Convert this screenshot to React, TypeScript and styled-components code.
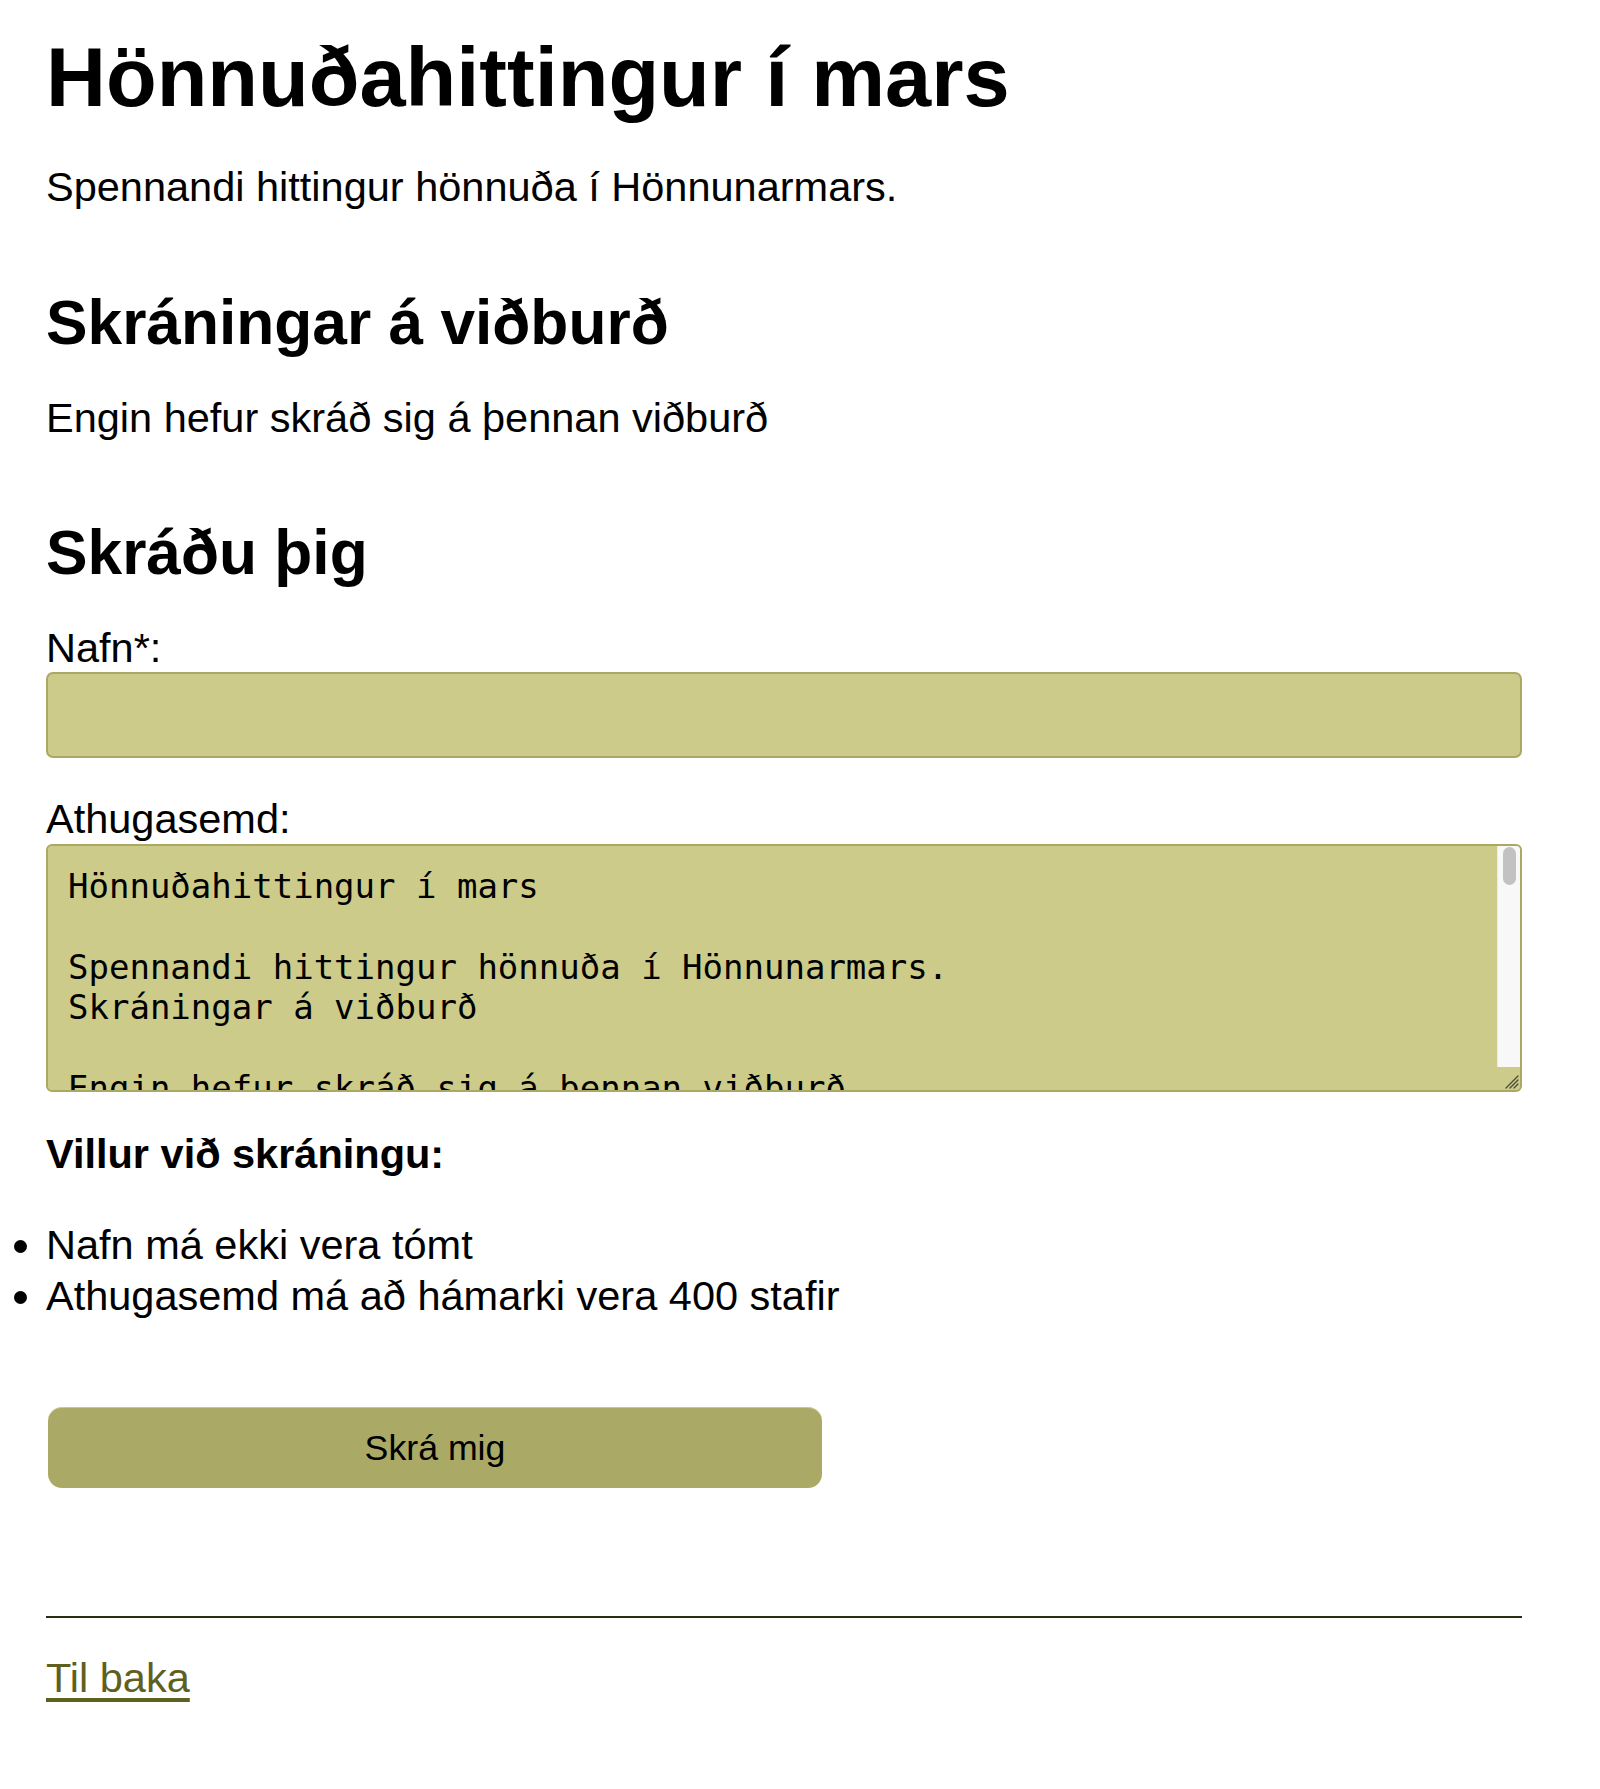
import React from "react";
import styled, { createGlobalStyle } from "styled-components";

const GlobalStyle = createGlobalStyle`
  html, body {
    margin: 0;
    padding: 0;
    background: #ffffff;
  }
  body {
    font-family: "Liberation Sans", Arial, Helvetica, sans-serif;
    font-size: 41.5px;
    color: #000000;
  }
`;

const Page = styled.main`
  padding: 30px 78px 80px 46px;
`;

const Title = styled.h1`
  font-size: 83px;
  font-weight: 700;
  line-height: normal;
  margin: 0 0 37px;
`;

const Text = styled.p<{ $gap: number }>`
  margin: 0 0 ${(p) => p.$gap}px;
  line-height: normal;
`;

const SectionTitle = styled.h2`
  font-size: 62.25px;
  font-weight: 700;
  line-height: normal;
  margin: 0 0 36px;
`;

const Form = styled.form`
  display: flex;
  flex-direction: column;
`;

const Field = styled.div`
  display: flex;
  flex-direction: column;
  margin-bottom: 37px;
`;

const Label = styled.label`
  display: block;
  line-height: normal;
`;

const TextInput = styled.input`
  box-sizing: border-box;
  width: 100%;
  height: 86px;
  margin: 0;
  padding: 0 18px;
  background: #cccb8a;
  border: 2px solid #aaa963;
  border-radius: 7px;
  font-family: "Liberation Sans", Arial, sans-serif;
  font-size: 41.5px;
  outline: none;
`;

const TextAreaWrap = styled.div`
  position: relative;
  margin-top: 1px;
  height: 248px;
`;

const TextArea = styled.textarea`
  box-sizing: border-box;
  display: block;
  width: 100%;
  height: 100%;
  margin: 0;
  padding: 20px 48px 20px 20px;
  background: #cccb8a;
  border: 2px solid #aaa963;
  border-radius: 6px;
  font-family: "DejaVu Sans Mono", "Liberation Mono", monospace;
  font-size: 34px;
  line-height: 40.4px;
  color: #000;
  outline: none;
  resize: none;
  overflow: hidden;
`;

const ScrollTrack = styled.div`
  position: absolute;
  top: 2px;
  right: 2px;
  bottom: 25px;
  width: 23px;
  box-sizing: border-box;
  background: #f8f8f8;
  border-left: 1px solid #ebebeb;
  border-top-right-radius: 4px;
  pointer-events: none;
`;

const ScrollThumb = styled.div`
  position: absolute;
  top: 1px;
  left: 5px;
  width: 13px;
  height: 38px;
  border-radius: 7px;
  background: #c2c2c2;
`;

const ResizeGrip = styled.svg`
  position: absolute;
  right: 3px;
  bottom: 3px;
  width: 16px;
  height: 16px;
  pointer-events: none;
`;

const ErrorTitle = styled.h4`
  font-size: 41.5px;
  font-weight: 700;
  line-height: normal;
  margin: 1px 0 41px;
`;

const ErrorList = styled.ul`
  margin: 0 0 86px;
  padding: 0;
  list-style: disc outside;
`;

const ErrorItem = styled.li`
  line-height: 51px;
`;

const SubmitButton = styled.button`
  align-self: flex-start;
  width: 774px;
  height: 81px;
  margin: 0 0 0 2px;
  padding: 0;
  background: #aaaa66;
  border: none;
  border-top: 1px solid #c9c98e;
  border-radius: 14px;
  font-family: "Liberation Sans", Arial, sans-serif;
  font-size: 35.7px;
  color: #000;
  cursor: pointer;
`;

const Divider = styled.hr`
  margin: 128px 0 36px;
  border: none;
  border-top: 2px solid #2b2b10;
  height: 0;
`;

const BackLink = styled.a`
  color: #5f5f1f;
  text-decoration: underline;
  text-underline-offset: 6px;
  line-height: normal;
`;

const textareaValue = [
  "Hönnuðahittingur í mars",
  "",
  "Spennandi hittingur hönnuða í Hönnunarmars.",
  "Skráningar á viðburð",
  "",
  "Engin hefur skráð sig á þennan viðburð",
  "",
  "Skráðu þig",
  "Nafn*:",
  "Athugasemd:",
  "Villur við skráningu:",
  "",
  "    Nafn má ekki vera tómt",
  "    Athugasemd má að hámarki vera 400 stafir",
  "",
  "Skrá mig",
  "Til baka",
  "",
  "Hönnuðahittingur í mars",
  "",
  "Spennandi hittingur hönnuða í Hönnunarmars.",
  "Skráningar á viðburð",
  "",
  "Engin hefur skráð sig á þennan viðburð",
  "",
  "Skráðu þig",
  "Nafn*:",
  "Athugasemd:",
  "Villur við skráningu:",
  "",
  "    Nafn má ekki vera tómt",
  "    Athugasemd má að hámarki vera 400 stafir",
  "",
  "Skrá mig",
  "Til baka",
].join("\n");

export default function App() {
  return (
    <>
      <GlobalStyle />
      <Page>
        <Title>Hönnuðahittingur í mars</Title>
        <Text $gap={76}>Spennandi hittingur hönnuða í Hönnunarmars.</Text>
        <SectionTitle>Skráningar á viðburð</SectionTitle>
        <Text $gap={75}>Engin hefur skráð sig á þennan viðburð</Text>
        <SectionTitle>Skráðu þig</SectionTitle>
        <Form onSubmit={(e) => e.preventDefault()}>
          <Field>
            <Label htmlFor="name">Nafn*:</Label>
            <TextInput id="name" type="text" defaultValue="" />
          </Field>
          <Field>
            <Label htmlFor="comment">Athugasemd:</Label>
            <TextAreaWrap>
              <TextArea id="comment" defaultValue={textareaValue} />
              <ScrollTrack>
                <ScrollThumb />
              </ScrollTrack>
              <ResizeGrip viewBox="0 0 16 16">
                <path
                  d="M15 3 L3 15 M15 7 L7 15 M15 11 L11 15"
                  stroke="#4a4a3a"
                  strokeWidth="1.3"
                  strokeLinecap="round"
                  fill="none"
                />
              </ResizeGrip>
            </TextAreaWrap>
          </Field>
          <ErrorTitle>Villur við skráningu:</ErrorTitle>
          <ErrorList>
            <ErrorItem>Nafn má ekki vera tómt</ErrorItem>
            <ErrorItem>Athugasemd má að hámarki vera 400 stafir</ErrorItem>
          </ErrorList>
          <SubmitButton type="submit">Skrá mig</SubmitButton>
        </Form>
        <Divider />
        <BackLink href="#">Til baka</BackLink>
      </Page>
    </>
  );
}
